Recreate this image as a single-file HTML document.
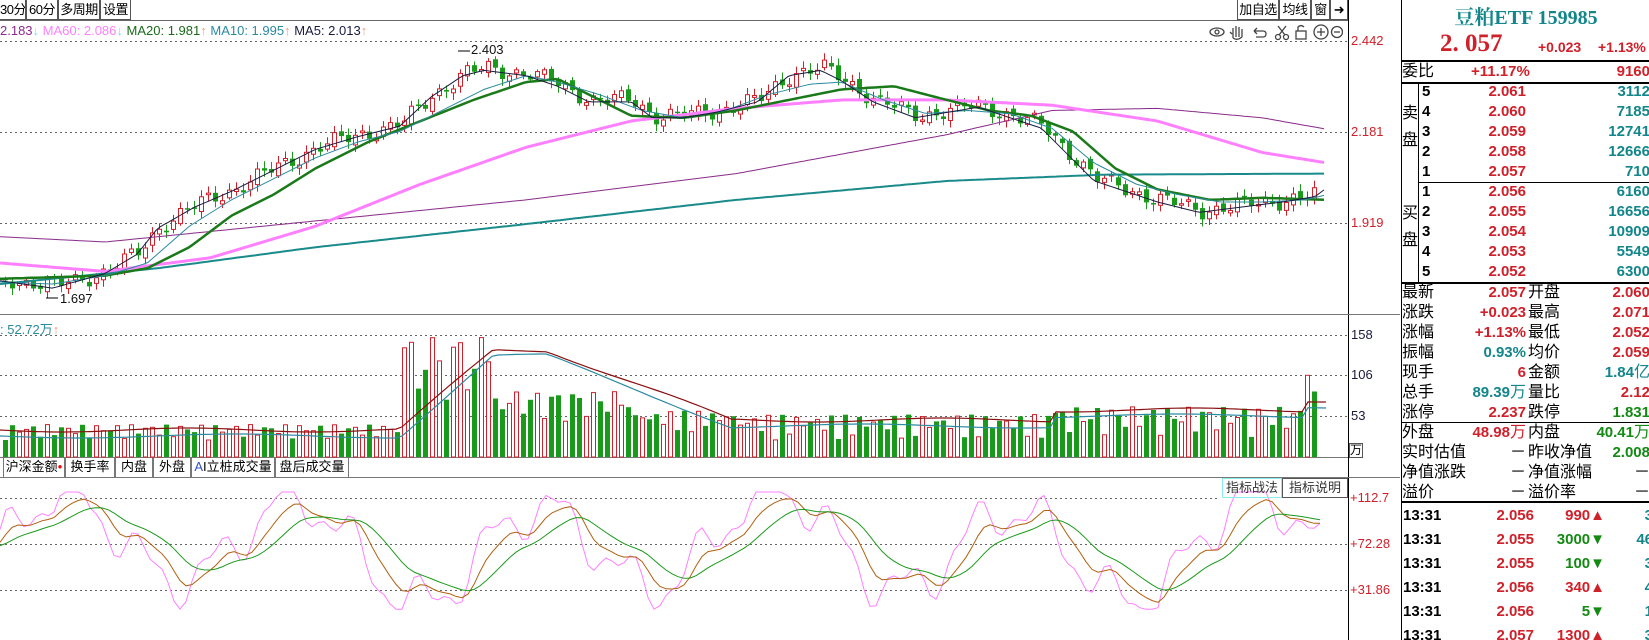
<!DOCTYPE html>
<html><head><meta charset="utf-8">
<style>
*{margin:0;padding:0;box-sizing:border-box}
body{width:1649px;height:640px;overflow:hidden;background:#fff;font-family:"Liberation Sans","Noto Sans CJK SC",sans-serif;position:relative}
.a{position:absolute;white-space:nowrap}
.btn{position:absolute;top:0;height:20px;border:1px solid #555;border-top:none;font-size:13px;line-height:19px;text-align:center;background:#fff;white-space:nowrap;overflow:hidden;letter-spacing:-0.5px}
.r{color:#d0202a}.t{color:#12868a}.g{color:#138a13}.k{color:#000}
.rp{position:absolute;left:1401px;top:0;width:248px;height:640px;border-left:1px solid #000;font-size:16px}
.row{position:absolute;left:0;width:248px;height:20px;line-height:20px}
.num{font-weight:bold;font-size:15px;font-family:"Liberation Sans",sans-serif}
.hl{position:absolute;left:0;width:248px;height:2px;background:#000}
.tab{position:absolute;top:458px;height:20px;border:1px solid #777;border-top:none;font-size:13px;line-height:18px;text-align:center;white-space:nowrap;overflow:hidden}
</style></head><body>
<div class="btn" style="left:0;width:26px;border-left:none">30分</div>
<div class="btn" style="left:26px;width:32px">60分</div>
<div class="btn" style="left:58px;width:42px">多周期</div>
<div class="btn" style="left:100px;width:31px">设置</div>
<div class="btn" style="left:1237px;width:42px">加自选</div>
<div class="btn" style="left:1279px;width:32px">均线</div>
<div class="btn" style="left:1311px;width:19px">窗</div>
<div class="btn" style="left:1330px;width:18px;font-size:13px">&#10140;</div>
<div class="a" style="left:0;top:20px;width:1348px;height:1px;background:#666"></div>
<div class="a" style="left:0;top:23px;font-size:13px;line-height:16px"><span style="color:#8a2a8a">2.183</span><span style="color:#7fd8f0">↓</span> <span style="color:#ff80ff">MA60: 2.086</span><span style="color:#7fd8f0">↓</span> <span style="color:#1a6a1a">MA20: 1.981</span><span style="color:#f0a080">↑</span> <span style="color:#2a8aa0">MA10: 1.995</span><span style="color:#f0a080">↑</span> <span style="color:#1a1a40">MA5: 2.013</span><span style="color:#f0a080">↑</span></div>
<div class="a" style="left:0;top:322px;font-size:13px;line-height:16px;color:#2a8aa0">: 52.72万<span style="color:#f0a080">↑</span></div>
<svg class="a" style="left:1208px;top:22px" width="135" height="20" fill="none" stroke="#444" stroke-width="1.3">
<ellipse cx="9" cy="10" rx="7" ry="4"/><circle cx="9" cy="10" r="2"/>
<path d="M25 16 L25 6 M28 15 L28 4 M31 15 L31 5 M34 15 L34 7 M24 12 L22 10 M25 16 Q29 19 34 15"/>
<path d="M46 9 L55 9 Q58 9 58 12 Q58 15 55 15 L48 15 M46 9 L49 6 M46 9 L49 12"/>
<circle cx="70" cy="15" r="2.5"/><circle cx="78" cy="15" r="2.5"/><path d="M71 13 L78 4 M77 13 L70 4"/>
<rect x="88" y="9" width="10" height="8"/><path d="M90 9 L90 5 Q93 2 96 5"/>
<circle cx="113" cy="10" r="7"/><path d="M109 10 L117 10 M113 6 L113 14"/>
<circle cx="129" cy="10" r="5.5"/><path d="M126 10 L132 10"/>
</svg>

<svg class="a" style="left:0;top:0" width="1400" height="640" id="sv">
<g stroke="#666" stroke-dasharray="2,3" stroke-width="1">
<line x1="0" y1="41.5" x2="1348" y2="41.5"/><line x1="0" y1="132.5" x2="1348" y2="132.5"/><line x1="0" y1="223.5" x2="1348" y2="223.5"/>
<line x1="0" y1="335.5" x2="1348" y2="335.5"/><line x1="0" y1="375.5" x2="1348" y2="375.5"/><line x1="0" y1="416.5" x2="1348" y2="416.5"/>
<line x1="0" y1="498.5" x2="1220" y2="498.5"/><line x1="0" y1="544.5" x2="1348" y2="544.5"/><line x1="0" y1="590.5" x2="1348" y2="590.5"/>
</g>
<line x1="1348.5" y1="0" x2="1348.5" y2="640" stroke="#000"/>
<line x1="0" y1="314.5" x2="1400" y2="314.5" stroke="#777"/>
<line x1="0" y1="457.5" x2="1348" y2="457.5" stroke="#777"/>
<line x1="0" y1="477.5" x2="1400" y2="477.5" stroke="#777"/>
<g id="gen"></g>
</svg>
<div class="a r" style="left:1351px;top:33px;font-size:13px">2.442</div>
<div class="a r" style="left:1351px;top:124px;font-size:13px">2.181</div>
<div class="a r" style="left:1351px;top:215px;font-size:13px">1.919</div>
<div class="a" style="left:1351px;top:327px;font-size:13px;color:#1a1a40">158</div>
<div class="a" style="left:1351px;top:367px;font-size:13px;color:#1a1a40">106</div>
<div class="a" style="left:1351px;top:408px;font-size:13px;color:#1a1a40">53</div>
<div class="a" style="left:1349px;top:443px;width:14px;height:15px;border:1px solid #555;font-size:12px;line-height:13px">万</div>
<div class="a r" style="left:1350px;top:490px;font-size:13px">+112.7</div>
<div class="a r" style="left:1350px;top:536px;font-size:13px">+72.28</div>
<div class="a r" style="left:1350px;top:582px;font-size:13px">+31.86</div>
<div class="a" style="left:471px;top:42px;font-size:13px;color:#111">2.403</div>
<div class="a" style="left:60px;top:291px;font-size:13px;color:#111">1.697</div>

<div class="tab" style="left:3px;width:62px">沪深金额<span style="color:red;font-size:8px;vertical-align:top">●</span></div>
<div class="tab" style="left:65px;width:50px">换手率</div>
<div class="tab" style="left:115px;width:38px">内盘</div>
<div class="tab" style="left:153px;width:38px">外盘</div>
<div class="tab" style="left:191px;width:84px"><span style="color:#3050c0">A</span>I立桩成交量</div>
<div class="tab" style="left:275px;width:74px">盘后成交量</div>
<div class="a" style="left:1222px;top:478px;width:60px;height:20px;border:1px solid #8ee;font-size:13px;line-height:18px;text-align:center;color:#333">指标战法</div>
<div class="a" style="left:1282px;top:478px;width:66px;height:20px;border:1px solid #555;font-size:13px;line-height:18px;text-align:center;color:#333">指标说明</div>

<div class="rp">
<div class="a t" style="left:0;width:248px;top:1px;text-align:center;font-family:'Liberation Serif','Noto Serif CJK SC',serif;font-weight:bold;font-size:20px">豆粕ETF 159985</div>
<div class="a r" style="left:38px;top:30px;font-family:'Liberation Serif',serif;font-weight:bold;font-size:25px">2. 057</div>
<div class="a r num" style="left:136px;top:39px;font-size:14px">+0.023</div>
<div class="a r num" style="left:196px;top:39px;font-size:14px">+1.13%</div>
<div class="hl" style="top:60px"></div>
<div class="row" style="top:62px"><span class="a">委比</span><span class="a r num" style="left:69px">+11.17%</span><span class="a r num" style="right:0">9160</span></div>
<div class="hl" style="top:82px"></div>
<div class="a" style="left:16px;top:82px;width:1px;height:200px;background:#000"></div>
<div class="a" style="left:0;top:100px;width:16px;font-size:16px;line-height:27px">卖<br>盘</div>
<div class="a" style="left:0;top:200px;width:16px;font-size:16px;line-height:27px">买<br>盘</div>
<div class="row num" style="top:82px"><span class="a" style="left:20px">5</span><span class="a r" style="right:124px">2.061</span><span class="a t" style="right:0">3112</span></div>
<div class="row num" style="top:102px"><span class="a" style="left:20px">4</span><span class="a r" style="right:124px">2.060</span><span class="a t" style="right:0">7185</span></div>
<div class="row num" style="top:122px"><span class="a" style="left:20px">3</span><span class="a r" style="right:124px">2.059</span><span class="a t" style="right:0">12741</span></div>
<div class="row num" style="top:142px"><span class="a" style="left:20px">2</span><span class="a r" style="right:124px">2.058</span><span class="a t" style="right:0">12666</span></div>
<div class="row num" style="top:162px"><span class="a" style="left:20px">1</span><span class="a r" style="right:124px">2.057</span><span class="a t" style="right:0">710</span></div>
<div class="a" style="left:16px;top:182px;width:232px;height:1px;background:#000"></div>
<div class="row num" style="top:182px"><span class="a" style="left:20px">1</span><span class="a r" style="right:124px">2.056</span><span class="a t" style="right:0">6160</span></div>
<div class="row num" style="top:202px"><span class="a" style="left:20px">2</span><span class="a r" style="right:124px">2.055</span><span class="a t" style="right:0">16656</span></div>
<div class="row num" style="top:222px"><span class="a" style="left:20px">3</span><span class="a r" style="right:124px">2.054</span><span class="a t" style="right:0">10909</span></div>
<div class="row num" style="top:242px"><span class="a" style="left:20px">4</span><span class="a r" style="right:124px">2.053</span><span class="a t" style="right:0">5549</span></div>
<div class="row num" style="top:262px"><span class="a" style="left:20px">5</span><span class="a r" style="right:124px">2.052</span><span class="a t" style="right:0">6300</span></div>
<div class="hl" style="top:282px"></div>
<div class="row" style="top:283px"><span class="a">最新</span><span class="a r num" style="right:124px">2.057</span><span class="a" style="left:126px">开盘</span><span class="a r num" style="right:0">2.060</span></div>
<div class="row" style="top:303px"><span class="a">涨跌</span><span class="a r num" style="right:124px">+0.023</span><span class="a" style="left:126px">最高</span><span class="a r num" style="right:0">2.071</span></div>
<div class="row" style="top:323px"><span class="a">涨幅</span><span class="a r num" style="right:124px">+1.13%</span><span class="a" style="left:126px">最低</span><span class="a r num" style="right:0">2.052</span></div>
<div class="row" style="top:343px"><span class="a">振幅</span><span class="a t num" style="right:124px">0.93%</span><span class="a" style="left:126px">均价</span><span class="a r num" style="right:0">2.059</span></div>
<div class="row" style="top:363px"><span class="a">现手</span><span class="a r num" style="right:124px">6</span><span class="a" style="left:126px">金额</span><span class="a t num" style="right:0">1.84<span style="font-weight:normal;font-size:16px">亿</span></span></div>
<div class="row" style="top:383px"><span class="a">总手</span><span class="a t num" style="right:124px">89.39<span style="font-weight:normal;font-size:16px">万</span></span><span class="a" style="left:126px">量比</span><span class="a r num" style="right:0">2.12</span></div>
<div class="row" style="top:403px"><span class="a">涨停</span><span class="a r num" style="right:124px">2.237</span><span class="a" style="left:126px">跌停</span><span class="a g num" style="right:0">1.831</span></div>
<div class="a" style="left:0;top:422px;width:248px;height:1px;background:#000"></div>
<div class="row" style="top:423px"><span class="a">外盘</span><span class="a r num" style="right:124px">48.98<span style="font-weight:normal;font-size:16px">万</span></span><span class="a" style="left:126px">内盘</span><span class="a g num" style="right:0">40.41<span style="font-weight:normal;font-size:16px">万</span></span></div>
<div class="row" style="top:443px"><span class="a">实时估值</span><span class="a" style="right:124px">－</span><span class="a" style="left:126px">昨收净值</span><span class="a g num" style="right:0">2.008</span></div>
<div class="row" style="top:463px"><span class="a">净值涨跌</span><span class="a" style="right:124px">－</span><span class="a" style="left:126px">净值涨幅</span><span class="a" style="right:0">－</span></div>
<div class="row" style="top:483px"><span class="a">溢价</span><span class="a" style="right:124px">－</span><span class="a" style="left:126px">溢价率</span><span class="a" style="right:0">－</span></div>
<div class="a" style="left:0;top:501px;width:248px;height:2px;background:#000"></div>
</div>
<script>
(function(){
var s=1.052,G=document.getElementById('gen'),h='';
function interp(pts,x){for(var i=1;i<pts.length;i++){if(x<=pts[i][0]){var a=pts[i-1],b=pts[i];var t=(x-a[0])/(b[0]-a[0]);return a[1]+(b[1]-a[1])*t;}}return pts[pts.length-1][1];}
function sc(p){return p.map(function(q){return [q[0]*s,q[1]*s];});}
function line(pts,c,w){var d='';for(var x=0;x<=1327;x+=4){d+=(x?'L':'M')+x+' '+interp(pts,x).toFixed(1);}h+='<path d="'+d+'" fill="none" stroke="'+c+'" stroke-width="'+w+'"/>';}
var close=sc([[0,265],[50,272],[100,258],[130,240],[150,215],[185,195],[220,180],[260,160],[300,140],[340,128],[380,118],[410,90],[440,70],[460,65],[500,70],[530,80],[560,95],[600,95],[620,110],[650,110],[680,105],[720,95],[750,70],[780,65],[800,75],[830,95],[870,110],[900,105],[930,100],[960,110],[990,120],[1010,140],[1040,170],[1070,180],[1100,190],[1140,200],[1180,195],[1220,190],[1250,185],[1262,176]]);
var ma10=sc([[0,268],[50,270],[100,262],[140,250],[180,215],[220,190],[260,170],[300,150],[340,135],[380,125],[420,105],[460,85],[500,72],[530,78],[570,90],[610,105],[650,112],[690,105],[730,90],[770,80],[800,78],[840,95],[880,108],[920,105],[960,108],[1000,122],[1040,155],[1080,175],[1120,185],[1160,192],[1200,192],[1240,190],[1262,185]]);
var ma20=sc([[0,265],[100,262],[140,255],[180,235],[220,205],[260,185],[300,160],[350,135],[400,115],[450,95],[500,78],[530,75],[570,95],[600,110],[650,112],[700,105],[750,95],[800,85],[850,82],[900,95],[940,105],[980,110],[1020,125],[1060,160],[1100,180],[1150,190],[1200,188],[1262,190]]);
var ma60=sc([[0,250],[100,258],[200,245],[300,215],[400,175],[500,140],[600,115],[700,103],[800,95],[900,95],[1000,100],[1100,115],[1200,145],[1262,155]]);
var ma120=sc([[0,225],[100,230],[300,210],[500,190],[700,165],[900,128],[1000,105],[1100,103],[1200,112],[1262,123]]);
var ma250=sc([[0,270],[150,255],[300,235],[500,213],[700,190],[900,172],[1050,166],[1262,165]]);
var N=188,prev=interp(close,0);
for(var i=0;i<N;i++){var x=i*7+3;var c=interp(close,x)+Math.sin(i*1.7)*6+Math.sin(i*0.63)*4;var o=prev+Math.sin(i*2.3)*3;
var up=c<o;var top=Math.min(o,c),bot=Math.max(o,c);if(bot-top<1.5)bot=top+1.5;
var hi=top-2-Math.abs(Math.sin(i*3.1))*5,lo=bot+2+Math.abs(Math.cos(i*2.7))*5;
var col=up?'#d0202a':'#1a9a1a';
h+='<line x1="'+(x+2.5)+'" y1="'+hi.toFixed(1)+'" x2="'+(x+2.5)+'" y2="'+lo.toFixed(1)+'" stroke="'+col+'"/>';
if(up)h+='<rect x="'+(x+0.5)+'" y="'+top.toFixed(1)+'" width="4" height="'+(bot-top).toFixed(1)+'" fill="#fff" stroke="'+col+'"/>';
else h+='<rect x="'+x+'" y="'+top.toFixed(1)+'" width="5" height="'+(bot-top).toFixed(1)+'" fill="'+col+'"/>';
prev=c;
var dx=x/s,v;
if(dx<380)v=22+Math.abs(Math.sin(i*1.3))*20;else if(dx<470)v=60+Math.abs(Math.sin(i*0.9))*95;else if(dx<600)v=45+Math.abs(Math.sin(i*1.1))*40;else if(dx<700)v=30+Math.abs(Math.sin(i*1.7))*30;else if(dx<1000)v=20+Math.abs(Math.sin(i*1.4))*35;else v=25+Math.abs(Math.sin(i*1.2))*40;
if(i==N-2){v=106;up=true;}if(i==N-1){v=85;up=false;}
var vh=v*0.771,vy=457-vh;var vc=up?'#d0202a':'#1a9a1a';
if(up)h+='<rect x="'+(x+0.5)+'" y="'+vy.toFixed(1)+'" width="4" height="'+vh.toFixed(1)+'" fill="#fff" stroke="'+vc+'"/>';
else h+='<rect x="'+x+'" y="'+vy.toFixed(1)+'" width="5" height="'+vh.toFixed(1)+'" fill="'+vc+'"/>';
}
line(ma250,'#1a8a8a',2);line(ma120,'#8a2a8a',1);line(ma60,'#ff80ff',3);line(ma20,'#1a7a1a',2.5);line(ma10,'#2a8aa0',1);line(close.map(function(p){return [p[0],p[1]+2];}),'#1a1a40',1);
var vm1='',vm2='';for(var x=0;x<=1327;x+=6){var dx=x/s;var a=dx<380?430:dx<470?430-(dx-380)*0.9:dx<520?350:dx<700?350+(dx-520)*0.4:dx<1000?420:dx<1240?410:400;vm1+=(x?'L':'M')+x+' '+(a+Math.sin(x/40)*2).toFixed(1);vm2+=(x?'L':'M')+x+' '+(a+6+Math.sin(x/50)*2).toFixed(1);}
h+='<path d="'+vm1+'" fill="none" stroke="#8a1010" stroke-width="1.2"/><path d="'+vm2+'" fill="none" stroke="#2a8aa0" stroke-width="1.2"/>';
var p1='',p2='',p3='';var m2=70,m3=70;for(var x=0;x<=1320;x+=6){var k=70+40*Math.sin(x/38)+18*Math.sin(x/11+1)+10*Math.sin(x/97)+8*Math.sin(x/5);k=Math.max(15,Math.min(118,k));m2+=(k-m2)*0.25;m3+=(m2-m3)*0.2;
var f=function(v){return (498+(112.7-v)*1.138).toFixed(1);};
p1+=(x?'L':'M')+x+' '+f(k);p2+=(x?'L':'M')+x+' '+f(m2);p3+=(x?'L':'M')+x+' '+f(m3);}
h+='<path d="'+p1+'" fill="none" stroke="#ff80ff"/><path d="'+p2+'" fill="none" stroke="#b06010"/><path d="'+p3+'" fill="none" stroke="#1a9a1a"/>';
h+='<line x1="458" y1="51" x2="470" y2="51" stroke="#000"/><line x1="46" y1="298" x2="58" y2="298" stroke="#000"/>';
G.innerHTML=h;
})();
</script>
<div class="a" style="left:1401px;top:503px;width:248px;height:137px;font-weight:bold;font-size:15px;font-family:'Liberation Sans',sans-serif;overflow:hidden">
<div class="row" style="top:3px"><span class="a" style="left:2px">13:31</span><span class="a r" style="right:115px">2.056</span><span class="a r" style="right:44px">990▲</span><span class="a t" style="right:-4px">3</span></div>
<div class="row" style="top:27px"><span class="a" style="left:2px">13:31</span><span class="a r" style="right:115px">2.055</span><span class="a g" style="right:44px">3000▼</span><span class="a t" style="right:-4px">46</span></div>
<div class="row" style="top:51px"><span class="a" style="left:2px">13:31</span><span class="a r" style="right:115px">2.055</span><span class="a g" style="right:44px">100▼</span><span class="a t" style="right:-4px">3</span></div>
<div class="row" style="top:75px"><span class="a" style="left:2px">13:31</span><span class="a r" style="right:115px">2.056</span><span class="a r" style="right:44px">340▲</span><span class="a t" style="right:-4px">4</span></div>
<div class="row" style="top:99px"><span class="a" style="left:2px">13:31</span><span class="a r" style="right:115px">2.056</span><span class="a g" style="right:44px">5▼</span><span class="a t" style="right:-4px">1</span></div>
<div class="row" style="top:123px"><span class="a" style="left:2px">13:31</span><span class="a r" style="right:115px">2.057</span><span class="a r" style="right:44px">1300▲</span><span class="a t" style="right:-4px">3</span></div>
</div>
</body></html>
